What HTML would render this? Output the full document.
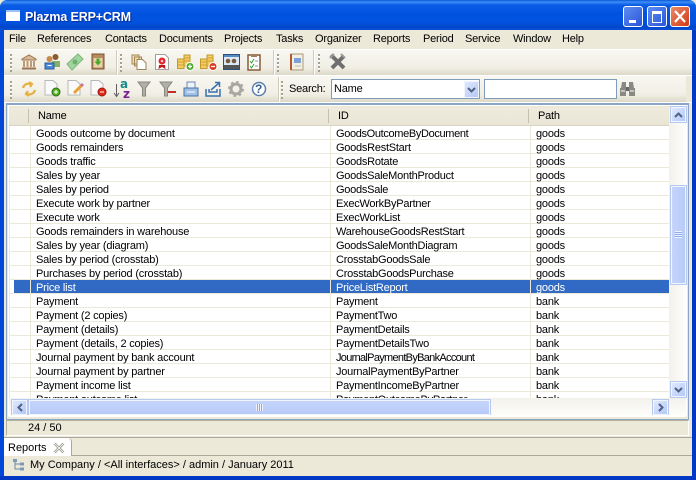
<!DOCTYPE html>
<html><head><meta charset="utf-8"><style>
html,body{margin:0;padding:0;background:#ece9d8}
#w{position:relative;width:696px;height:480px;overflow:hidden;background:#ece9d8;font:11px "Liberation Sans",sans-serif;letter-spacing:-.2px;color:#000}
#w div,#w span,#w svg{position:absolute;white-space:nowrap}
.m{top:33px;line-height:13px}
.r{left:10px;width:659px;height:13px;border-bottom:1px solid #ece9d8;background:#fff}
.r span{top:1px;line-height:14px}
.a{left:26px}.b{left:326px;letter-spacing:-.25px}.c{left:526px}
.s .a,.s .b,.s .c{color:#fff}
.g{width:2px;height:18px;background:repeating-linear-gradient(#a5a294 0 2px,#fff 2px 3px,transparent 3px 4px)}
.sp{width:1px;background:#cfccbc;border-right:1px solid #fff}
.btn{background:linear-gradient(135deg,#dfe8fd,#b4c8f7);border:1px solid #f0f4fd;box-shadow:0 0 0 1px #b8c9ee}
svg{overflow:visible}
</style></head><body><div id="w">
<div style="left:0;top:0;width:696px;height:30px;border-radius:7px 7px 0 0;background:linear-gradient(#0a55d8 0,#3d8ff5 2px,#0a5ce6 5px,#0252e0 14px,#0252e0 22px,#0247c8 27px,#0a50d8 30px)"></div>
<div style="left:0;top:30px;width:4px;height:450px;background:#0248d8"></div>
<div style="left:692px;top:30px;width:4px;height:450px;background:#0238c4"></div>
<div style="left:0;top:476px;width:696px;height:4px;background:#0238c4"></div>
<div style="left:6px;top:10px;width:14px;height:11px;background:#fff;border-top:2px solid #9cc0f0;box-sizing:border-box"></div>
<div style="left:25px;top:9px;font:bold 12.5px/16px 'Liberation Sans',sans-serif;letter-spacing:-.15px;color:#fff;text-shadow:1px 1px 1px #0a2a90">Plazma ERP+CRM</div>
<div style="left:623px;top:6px;width:18px;height:19px;border:1px solid #fff;border-radius:3px;background:linear-gradient(135deg,#5d8df0,#2a55d8)"><div style="left:5px;top:13px;width:7px;height:3px;background:#fff"></div></div>
<div style="left:647px;top:6px;width:18px;height:19px;border:1px solid #fff;border-radius:3px;background:linear-gradient(135deg,#5d8df0,#2a55d8)"><div style="left:4px;top:4px;width:8px;height:8px;border:1px solid #fff;border-top:3px solid #fff"></div></div>
<div style="left:670px;top:6px;width:18px;height:19px;border:1px solid #fff;border-radius:3px;background:linear-gradient(135deg,#ec8a68,#d03c14)"><svg style="left:3px;top:3px" width="12" height="12"><path d="M1 1L11 12M11 1L1 12" stroke="#fff" stroke-width="2.200"/></svg></div>

<div class="m" style="left:9px">File</div><div class="m" style="left:37px">References</div><div class="m" style="left:105px">Contacts</div><div class="m" style="left:159px">Documents</div><div class="m" style="left:224px">Projects</div><div class="m" style="left:276px">Tasks</div><div class="m" style="left:315px">Organizer</div><div class="m" style="left:373px">Reports</div><div class="m" style="left:423px">Period</div><div class="m" style="left:465px">Service</div><div class="m" style="left:513px">Window</div><div class="m" style="left:562px">Help</div>

<div style="left:4px;top:49px;width:688px;height:1px;background:#fff"></div>
<div style="left:4px;top:50px;width:688px;height:25px;background:linear-gradient(#f8f7f1,#f1efe5 70%,#dcd9c8)"></div>
<div style="left:4px;top:75px;width:688px;height:1px;background:#fff"></div>
<div style="left:4px;top:76px;width:682px;height:26px;background:linear-gradient(#f8f7f1,#f1efe5 70%,#dcd9c8)"></div>

<div class="g" style="left:10px;top:54px"></div><div class="sp" style="left:116px;top:50px;height:25px"></div><div class="g" style="left:120px;top:54px"></div><div class="sp" style="left:273px;top:50px;height:25px"></div><div class="g" style="left:277px;top:54px"></div><div class="sp" style="left:313px;top:50px;height:25px"></div><div class="g" style="left:318px;top:54px"></div>
<div class="g" style="left:10px;top:81px"></div><div class="sp" style="left:278px;top:77px;height:25px"></div><div class="g" style="left:281px;top:81px"></div>

<!-- toolbar 1 -->
<svg style="left:21px;top:54px" width="16" height="16"><path d="M1 5L8 1L15 5V6H1Z" fill="#d8b896" stroke="#9a7450"/><path d="M3 7V13M6.500 7V13M10 7V13M13 7V13" stroke="#c09a74" stroke-width="2"/><path d="M1 14.500H15" stroke="#9a7450" stroke-width="2"/></svg>
<svg style="left:44px;top:53px" width="17" height="17"><circle cx="11.500" cy="4" r="3" fill="#8a5a30"/><path d="M8 8H16V14H8Z" fill="#84b068"/><circle cx="5.500" cy="6" r="3" fill="#c98a4c"/><path d="M1 10H10V16H1Z" fill="#4a8ad8" stroke="#2a5a9c"/><path d="M3.500 12.500H7.500" stroke="#fff"/></svg>
<svg style="left:66px;top:53px" width="18" height="18"><path d="M1 11L12 1L17 6L6 17Z" fill="#a2d6a0" stroke="#7cb67c"/><circle cx="9" cy="9" r="2.500" fill="#6fb070"/></svg>
<svg style="left:91px;top:53px" width="14" height="17"><path d="M1 1H13V16H1Z" fill="#b98a5c" stroke="#7a5230"/><path d="M2.500 5H11.500V14.500H2.500Z" fill="#e8d2aa"/><path d="M5.500 5.500H8.500V8.500H10.500L7 12.500L3.500 8.500H5.500Z" fill="#4aa82a"/></svg>
<svg style="left:131px;top:54px" width="16" height="16"><path d="M1 1H8V10H1ZM3.500 3H10.500V12H3.500Z" fill="#f0dcb8" stroke="#a08656"/><path d="M6 5.500H11.500L15 9V15.500H6Z" fill="#fff" stroke="#a08656"/></svg>
<svg style="left:155px;top:54px" width="14" height="16"><path d="M.5 .5H10L13.500 4V15.500H.5Z" fill="#fff" stroke="#a0a0a0"/><path d="M4 11L3.500 15L7 13L10.500 15L10 11Z" fill="#c01818"/><circle cx="7" cy="7" r="3.500" fill="#e02828"/><circle cx="7" cy="7" r="1.300" fill="#fbd"/></svg>
<svg style="left:177px;top:53px" width="18" height="18"><path d="M.5 6H7V15.500H.5ZM7 2H13V13H7Z" fill="#f4cc60" stroke="#c09a30"/><path d="M1 9H6.500M1 12H6.500M7.500 5H12.500M7.500 8H12.500" stroke="#d0a438"/><circle cx="13" cy="13.500" r="4" fill="#46a824" stroke="#fff"/><path d="M11 13.500H15M13 11.500V15.500" stroke="#fff" stroke-width="1.300"/></svg>
<svg style="left:200px;top:53px" width="18" height="18"><path d="M.5 6H7V15.500H.5ZM7 2H13V13H7Z" fill="#f4cc60" stroke="#c09a30"/><path d="M1 9H6.500M1 12H6.500M7.500 5H12.500M7.500 8H12.500" stroke="#d0a438"/><circle cx="13" cy="13.500" r="4" fill="#dc3a20" stroke="#fff"/><path d="M11 13.500H15" stroke="#fff" stroke-width="1.300"/></svg>
<svg style="left:223px;top:54px" width="17" height="16"><path d="M.5 .5H16.500V15.500H.5Z" fill="#dce8f8" stroke="#2a5080"/><path d="M1 1H16V3H1Z" fill="#5a88c0"/><circle cx="5" cy="7" r="2.300" fill="#7a5a3a"/><circle cx="11" cy="7" r="2.300" fill="#7a5a3a"/><path d="M1 11H16V15H1Z" fill="#555"/></svg>
<svg style="left:247px;top:53px" width="14" height="18"><path d="M1 2H13V17H1Z" fill="#fff" stroke="#8a5a38" stroke-width="1.500"/><path d="M4 1H10V4H4Z" fill="#a08060"/><path d="M3 8L4.500 10L7 6M3 13L4.500 15L7 11" stroke="#30a030" fill="none"/><path d="M8 8H11M8 13H11" stroke="#8a9ab0"/></svg>
<svg style="left:289px;top:53px" width="15" height="18"><path d="M2 1H14V17H2Z" fill="#f3efe2" stroke="#a99878"/><path d="M2 1V17" stroke="#b85a30" stroke-width="2"/><path d="M5 5H12V10H5Z" fill="#7ca3d8"/><path d="M6 13H12" stroke="#bbb"/></svg>
<svg style="left:329px;top:53px" width="17" height="17"><path d="M2 2L15 15M15 3L3 15" stroke="#6f6f6f" stroke-width="4"/><path d="M1 5L5 1M12 1L16 5" stroke="#999" stroke-width="2"/></svg>

<!-- toolbar 2 -->
<svg style="left:21px;top:81px" width="16" height="16"><path d="M2 7C3 3 7 2 10 3M8 1L11 3L9 6M14 9C13 13 9 14 6 13M8 15L5 13L7 10" fill="none" stroke="#e6b040" stroke-width="2.200"/></svg>
<svg style="left:44px;top:80px" width="17" height="17"><path d="M1 .5H9L13 4V15H1Z" fill="#fafafa" stroke="#b8b8b8"/><circle cx="12" cy="12" r="4" fill="#58b028" stroke="#2a7010"/><path d="M10 12H14M12 10V14" stroke="#fff"/></svg>
<svg style="left:67px;top:80px" width="17" height="17"><path d="M1 .5H9L13 4V15H1Z" fill="#fafafa" stroke="#b8b8b8"/><path d="M7 13L15 5" stroke="#e8a030" stroke-width="3"/><path d="M14 6L16 4" stroke="#d070a0" stroke-width="3"/></svg>
<svg style="left:90px;top:80px" width="17" height="17"><path d="M1 .5H9L13 4V15H1Z" fill="#fafafa" stroke="#b8b8b8"/><circle cx="12" cy="12" r="4" fill="#e02818" stroke="#a01810"/><path d="M10 12H14" stroke="#fff"/></svg>
<svg style="left:113px;top:81px" width="8" height="17"><path d="M3.500 3V15M1 12L3.500 15.500L6 12" stroke="#606060" fill="none"/></svg>
<div style="left:120px;top:78px;font:bold 12px/12px 'DejaVu Sans',sans-serif;color:#1a8a8a;letter-spacing:0">a</div>
<div style="left:123px;top:88px;font:bold 12px/12px 'DejaVu Sans',sans-serif;color:#7a2090;letter-spacing:0">z</div>
<svg style="left:137px;top:81px" width="14" height="16"><path d="M1 1H13L8.500 7V15H5.500V7Z" fill="#b0b0a8" stroke="#888880"/></svg>
<svg style="left:159px;top:81px" width="18" height="16"><path d="M1 1H13L8.500 7V15H5.500V7Z" fill="#b0b0a8" stroke="#888880"/><path d="M9 11H17" stroke="#c03028" stroke-width="2"/></svg>
<svg style="left:183px;top:81px" width="16" height="16"><path d="M4 1H12V7H4Z" fill="#f0f4fa" stroke="#6a8ab0"/><path d="M1 7H15V15H1Z" fill="#a0c0e8" stroke="#4a70a0"/><path d="M4 11H12" stroke="#fff"/></svg>
<svg style="left:205px;top:81px" width="16" height="16"><path d="M1 8V15H15V8M4 8V11H12V8" fill="none" stroke="#3a70b0" stroke-width="1.500"/><path d="M6 9L14 2M10 1.500H14.500V6" fill="none" stroke="#3a70b0" stroke-width="1.500"/></svg>
<svg style="left:228px;top:81px" width="16" height="16"><circle cx="8" cy="8" r="5" fill="none" stroke="#a8a8a0" stroke-width="3"/><circle cx="8" cy="8" r="7" fill="none" stroke="#a8a8a0" stroke-width="2" stroke-dasharray="2.500 3"/></svg>
<svg style="left:251px;top:81px" width="16" height="16"><circle cx="8" cy="8" r="6.500" fill="#fff" stroke="#5a80b0" stroke-width="1.500"/></svg>
<div style="left:255px;top:82px;font:bold 12px/14px 'Liberation Sans',sans-serif;color:#3a5f90;letter-spacing:0">?</div>

<div style="left:289px;top:82px;line-height:14px">Search:</div>
<div style="left:331px;top:79px;width:147px;height:18px;background:#fff;border:1px solid #7f9db9"></div>
<div style="left:334px;top:82px;line-height:14px">Name</div>
<div class="btn" style="left:464px;top:81px;width:13px;height:15px;box-shadow:none"><svg style="left:2px;top:5px" width="9" height="6"><path d="M1 1L4.500 4.500L8 1" fill="none" stroke="#4d6185" stroke-width="2"/></svg></div>
<div style="left:484px;top:79px;width:131px;height:18px;background:#fff;border:1px solid #7f9db9"></div>
<svg style="left:619px;top:81px" width="17" height="16"><path d="M2 7L3 1H7V15H1V7ZM10 1H14L15 7L16 7V15H10Z" fill="#8a8a84"/><path d="M7 6H10V10H7Z" fill="#666"/><path d="M2 10H6M11 10H15" stroke="#c4c4bc" stroke-width="2"/></svg>

<!-- table panel -->
<div style="left:4px;top:102px;width:688px;height:1px;background:#fff"></div>
<div style="left:6px;top:103px;width:681px;height:314px;border:1px solid #8ba5c4;border-width:2px 1px"></div>
<div style="left:8px;top:105px;width:679px;height:311px;border:1px solid #fff;box-sizing:border-box"></div>
<div style="left:9px;top:108px;width:660px;height:17px;background:linear-gradient(#eeebde,#e9e6d6)"></div>
<div style="left:9px;top:125px;width:660px;height:1px;background:#d8d5c4"></div>
<div style="left:28px;top:109px;width:1px;height:14px;background:#c5c2b0"></div>
<div style="left:328px;top:109px;width:1px;height:14px;background:#c5c2b0"></div>
<div style="left:528px;top:109px;width:1px;height:14px;background:#c5c2b0"></div>
<div style="left:38px;top:110px;line-height:13px">Name</div><div style="left:338px;top:110px;line-height:13px">ID</div><div style="left:538px;top:110px;line-height:13px">Path</div>

<div style="left:10px;top:126px;width:659px;height:272px;overflow:hidden;background:#fff">
<div class="r" style="left:0;top:0"><span class="a">Goods outcome by document</span><span class="b" style="letter-spacing:-.35px">GoodsOutcomeByDocument</span><span class="c">goods</span></div>
<div class="r" style="left:0;top:14px"><span class="a">Goods remainders</span><span class="b">GoodsRestStart</span><span class="c">goods</span></div>
<div class="r" style="left:0;top:28px"><span class="a">Goods traffic</span><span class="b">GoodsRotate</span><span class="c">goods</span></div>
<div class="r" style="left:0;top:42px"><span class="a">Sales by year</span><span class="b">GoodsSaleMonthProduct</span><span class="c">goods</span></div>
<div class="r" style="left:0;top:56px"><span class="a">Sales by period</span><span class="b">GoodsSale</span><span class="c">goods</span></div>
<div class="r" style="left:0;top:70px"><span class="a">Execute work by partner</span><span class="b">ExecWorkByPartner</span><span class="c">goods</span></div>
<div class="r" style="left:0;top:84px"><span class="a">Execute work</span><span class="b">ExecWorkList</span><span class="c">goods</span></div>
<div class="r" style="left:0;top:98px"><span class="a">Goods remainders in warehouse</span><span class="b">WarehouseGoodsRestStart</span><span class="c">goods</span></div>
<div class="r" style="left:0;top:112px"><span class="a">Sales by year (diagram)</span><span class="b">GoodsSaleMonthDiagram</span><span class="c">goods</span></div>
<div class="r" style="left:0;top:126px"><span class="a">Sales by period (crosstab)</span><span class="b">CrosstabGoodsSale</span><span class="c">goods</span></div>
<div class="r" style="left:0;top:140px"><span class="a">Purchases by period (crosstab)</span><span class="b">CrosstabGoodsPurchase</span><span class="c">goods</span></div>
<div class="r s" style="left:0;top:154px"><div style="left:4px;top:0;width:655px;height:13px;background:#316ac5"></div><span class="a">Price list</span><span class="b">PriceListReport</span><span class="c">goods</span></div>
<div class="r" style="left:0;top:168px"><span class="a">Payment</span><span class="b">Payment</span><span class="c">bank</span></div>
<div class="r" style="left:0;top:182px"><span class="a">Payment (2 copies)</span><span class="b">PaymentTwo</span><span class="c">bank</span></div>
<div class="r" style="left:0;top:196px"><span class="a">Payment (details)</span><span class="b">PaymentDetails</span><span class="c">bank</span></div>
<div class="r" style="left:0;top:210px"><span class="a">Payment (details, 2 copies)</span><span class="b">PaymentDetailsTwo</span><span class="c">bank</span></div>
<div class="r" style="left:0;top:224px"><span class="a">Journal payment by bank account</span><span class="b" style="letter-spacing:-.7px">JournalPaymentByBankAccount</span><span class="c">bank</span></div>
<div class="r" style="left:0;top:238px"><span class="a">Journal payment by partner</span><span class="b">JournalPaymentByPartner</span><span class="c">bank</span></div>
<div class="r" style="left:0;top:252px"><span class="a">Payment income list</span><span class="b">PaymentIncomeByPartner</span><span class="c">bank</span></div>
<div class="r" style="left:0;top:266px"><span class="a">Payment outcome list</span><span class="b">PaymentOutcomeByPartner</span><span class="c">bank</span></div>
<div style="left:20px;top:0;width:1px;height:272px;background:#ece9d8"></div>
<div style="left:320px;top:0;width:1px;height:272px;background:#ece9d8"></div>
<div style="left:520px;top:0;width:1px;height:272px;background:#ece9d8"></div>
</div>

<!-- scrollbars -->
<div style="left:669px;top:107px;width:17px;height:291px;background:linear-gradient(90deg,#f3f1ec,#fdfdfa)"></div>
<div class="btn" style="left:671px;top:107px;width:13px;height:13px"><svg style="left:2px;top:4px" width="9" height="6"><path d="M1 5L4.500 1.500L8 5" fill="none" stroke="#4d6185" stroke-width="2"/></svg></div>
<div class="btn" style="left:671px;top:382px;width:13px;height:13px"><svg style="left:2px;top:4px" width="9" height="6"><path d="M1 1L4.500 4.500L8 1" fill="none" stroke="#4d6185" stroke-width="2"/></svg></div>
<div class="btn" style="left:671px;top:186px;width:13px;height:96px;background:linear-gradient(90deg,#c4d4fb,#b8cbf8)"><div style="left:3px;top:44px;width:7px;height:7px;background:repeating-linear-gradient(#eef3fe 0 1px,#8eaaec 1px 2px)"></div></div>
<div style="left:9px;top:398px;width:677px;height:17px;background:linear-gradient(#f3f1ec,#fdfdfa)"></div>
<div class="btn" style="left:12px;top:400px;width:13px;height:13px"><svg style="left:4px;top:2px" width="6" height="9"><path d="M5 1L1.500 4.500L5 8" fill="none" stroke="#4d6185" stroke-width="2"/></svg></div>
<div class="btn" style="left:653px;top:400px;width:13px;height:13px"><svg style="left:4px;top:2px" width="6" height="9"><path d="M1 1L4.500 4.500L1 8" fill="none" stroke="#4d6185" stroke-width="2"/></svg></div>
<div class="btn" style="left:29px;top:400px;width:459px;height:13px;background:linear-gradient(#c4d4fb,#b8cbf8)"><div style="left:226px;top:3px;width:7px;height:7px;background:repeating-linear-gradient(90deg,#eef3fe 0 1px,#8eaaec 1px 2px)"></div></div>
<div style="left:9px;top:415px;width:677px;height:2px;background:#fff"></div>

<!-- status -->
<div style="left:6px;top:420px;width:683px;height:16px;border:1px solid #b4b09c;border-bottom-color:#fff;border-right-color:#fff;box-sizing:border-box;background:#ece9d8"></div>
<div style="left:28px;top:422px;line-height:13px;letter-spacing:0">24 / 50</div>
<div style="left:4px;top:437px;width:688px;height:1px;background:#aca899"></div>
<div style="left:4px;top:455px;width:688px;height:1px;background:#aca899"></div>
<div style="left:4px;top:438px;width:67px;height:18px;background:#fff;border-right:1px solid #aca899;border-radius:0 4px 0 0"></div>
<div style="left:8px;top:442px;line-height:13px;letter-spacing:0">Reports</div>
<svg style="left:54px;top:443px" width="10" height="10"><path d="M.5 .5L9.500 9.500M9.500 .5L.5 9.500" stroke="#9a9a90" stroke-width="2.500"/><path d="M.5 .5L9.500 9.500M9.500 .5L.5 9.500" stroke="#fff" stroke-width=".8"/></svg>
<svg style="left:13px;top:459px" width="11" height="13"><path d="M2 1V10H8M2 5H8" fill="none" stroke="#6a8aa8"/><path d="M0 0H4V3H0ZM7 3.500H11V6.500H7ZM7 8.500H11V11.500H7Z" fill="#7a9ab8"/></svg>
<div style="left:30px;top:459px;line-height:13px;letter-spacing:0">My Company / &lt;All interfaces&gt; / admin / January 2011</div>
</div></body></html>
